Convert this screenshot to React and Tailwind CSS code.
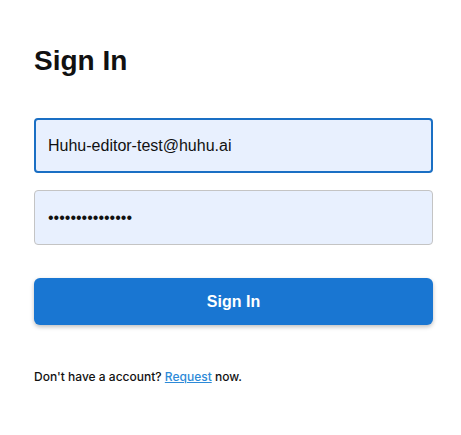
import React from 'react';

export default function App() {
  return (
    <div className="min-h-screen bg-white pl-[34px] pr-[28px] pt-[44px] font-['Liberation_Sans',Arial,sans-serif]">
      <h1 className="text-[28px] font-bold leading-[34px] text-[#111]">Sign In</h1>

      <form className="mt-[40px] flex flex-col" onSubmit={(e) => e.preventDefault()}>
        <input
          type="email"
          defaultValue="Huhu-editor-test@huhu.ai"
          className="h-[55px] w-full rounded-[4px] border-2 border-[#1a6fc4] bg-[#e8f0fe] px-[12px] text-[16px] text-[#111] outline-none"
        />
        <input
          type="password"
          defaultValue="huhueditortest1"
          className="mt-[17px] h-[55px] w-full rounded-[4px] border border-[#c4c4c4] bg-[#e8f0fe] px-[13px] text-[16px] text-[#111] outline-none"
        />
        <button
          type="submit"
          className="mt-[33px] h-[47px] w-full rounded-[6px] bg-[#1976d2] text-[16px] font-bold text-white shadow-[0_2px_4px_rgba(0,0,0,0.25)]"
        >
          Sign In
        </button>
      </form>

      <p className="mt-[43px] font-['Inter',sans-serif] text-[12px] font-medium text-[#111]">
        Don&apos;t have a account?{' '}
        <a href="#" className="text-[#2d8ad8] underline">
          Request
        </a>{' '}
        now.
      </p>
    </div>
  );
}
